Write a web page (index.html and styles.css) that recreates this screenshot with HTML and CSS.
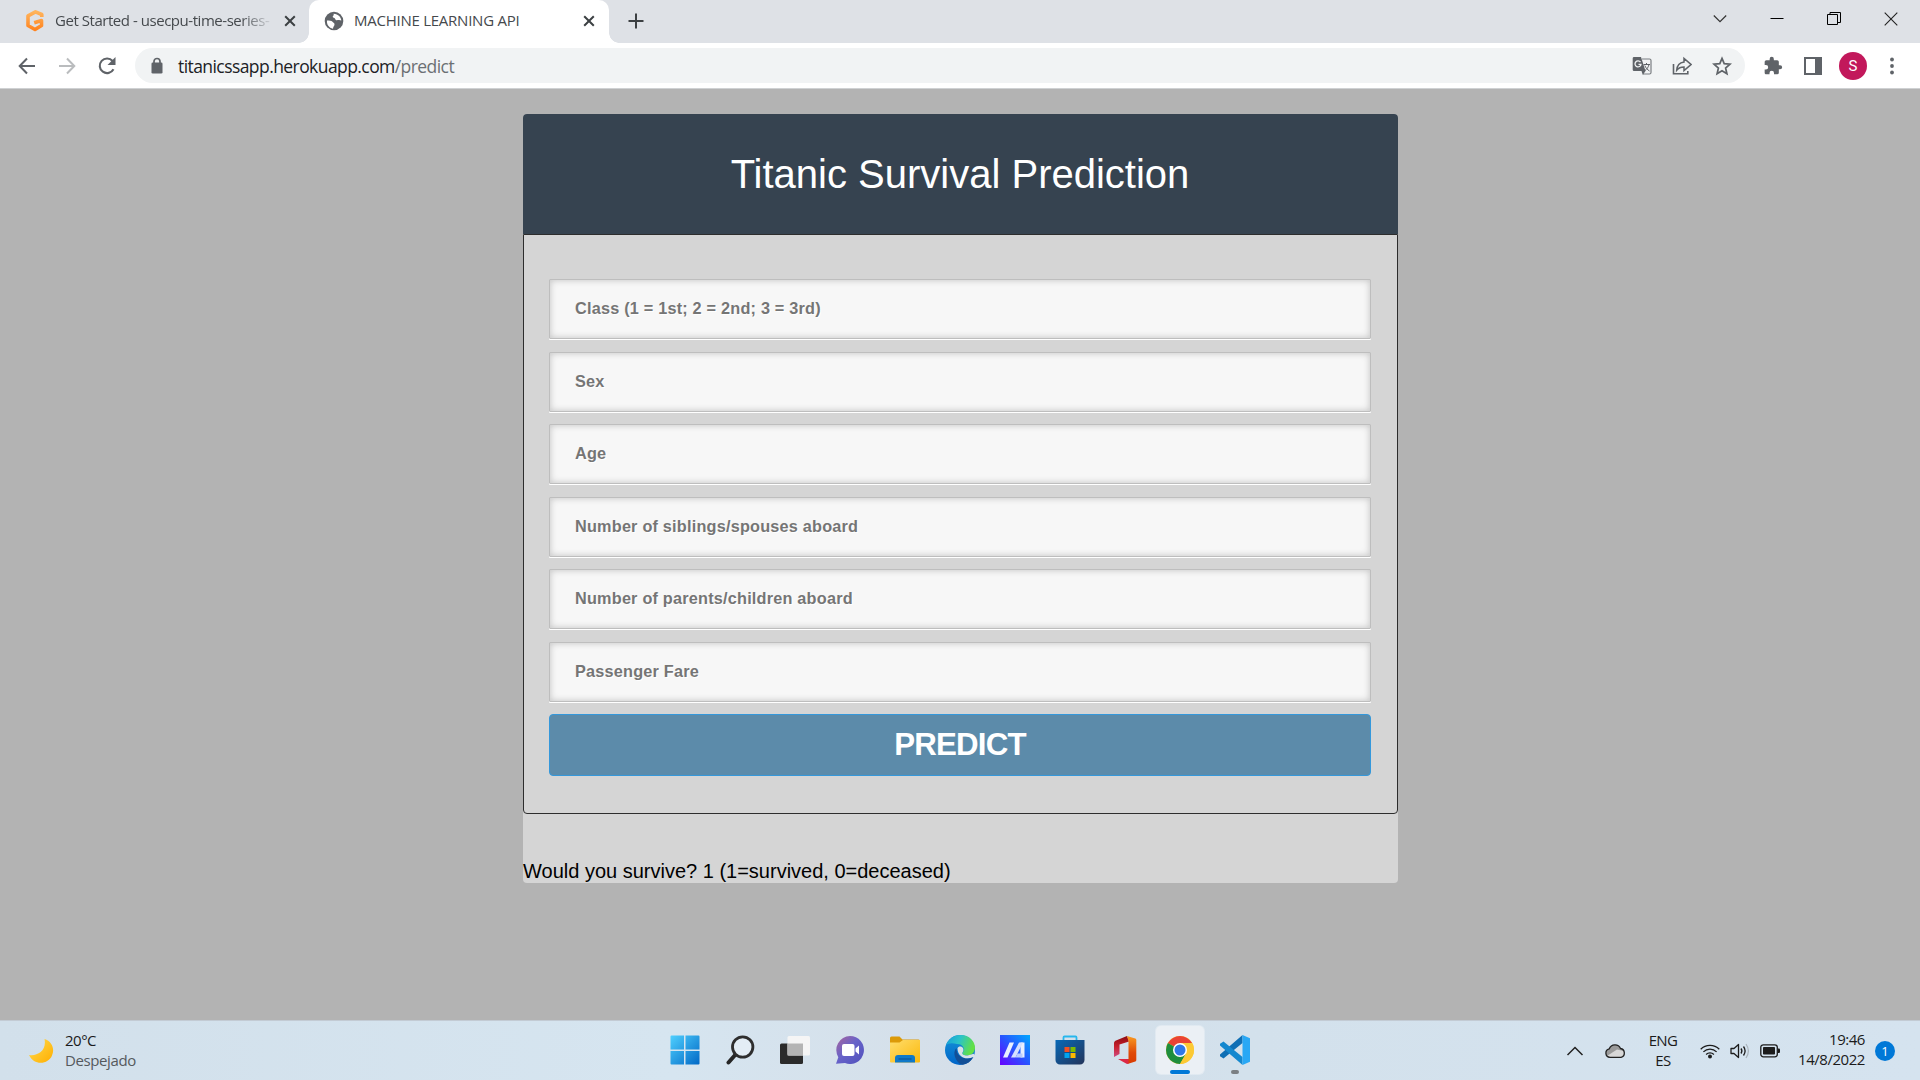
FILE: index.html
```html
<!DOCTYPE html>
<html lang="en">
<head>
<meta charset="utf-8">
<title>MACHINE LEARNING API</title>
<link rel="stylesheet" href="styles.css">
</head>
<body>
<header class="tabstrip">
  <div class="tab tab-first">
    <svg class="fav" width="20" height="24" viewBox="0 0 20 24"><path d="M16.800 8V5.500L10.500 2.800 3 6.800v9.700l7 4 6.500-4v-5L9.200 13.800" fill="none" stroke="url(#og)" stroke-width="3.600" stroke-linejoin="round"/><defs><linearGradient id="og" x1="0" y1="0" x2="0" y2="1"><stop offset="0" stop-color="#ffb45c"/><stop offset="1" stop-color="#ff8420"/></linearGradient></defs></svg>
    <span class="tab-title faded"><span class="t-get">Get Started - usecpu-time-series-</span></span>
    <svg class="tab-x" width="12" height="12" viewBox="0 0 12 12"><path d="M1.200 1.200l9.600 9.600M10.800 1.200l-9.600 9.600" stroke="#3c4043" stroke-width="2"/></svg>
  </div>
  <div class="tab tab-active">
    <svg class="globe" width="20" height="20" viewBox="0 0 20 20"><circle cx="10" cy="10" r="9.300" fill="#5f6368"/><path d="M3 9.500c2 .2 4.500-.2 5.500 1.300s2 1.200 2 2.700c0 1.500-1.300 2-1.500 4.200C5 17 2.500 13.500 3 9.500zM9.500 2.700c1 1.500-.7 2-.8 3 .1 1.300 2.300.8 2.500 2.200.2 1.200 1.600 1.600 2.800 1.200 1.300-.3 2-.2 3.300.5-.2-3.500-2.800-6.600-7.800-6.900z" fill="#fff"/></svg>
    <span class="tab-title t-ml">MACHINE LEARNING API</span>
    <svg class="tab-x" width="12" height="12" viewBox="0 0 12 12"><path d="M1.200 1.200l9.600 9.600M10.800 1.200l-9.600 9.600" stroke="#3c4043" stroke-width="2"/></svg>
  </div>
  <svg class="plus" width="16" height="16" viewBox="0 0 16 16"><path d="M8 .5v15M.5 8h15" stroke="#3c4043" stroke-width="2"/></svg>
  <div class="win">
    <svg width="14" height="14" viewBox="0 0 14 14"><path d="M.8 3.500 7 9.700l6.200-6.200" fill="none" stroke="#333" stroke-width="1.200"/></svg>
    <svg width="14" height="14" viewBox="0 0 14 14"><path d="M.5 6.500h13" stroke="#000"/></svg>
    <svg width="14" height="14" viewBox="0 0 14 14"><path d="M.5 2.500h10v10H.5zM3 2.500v-2h10.500V10.500h-3" fill="none" stroke="#000"/></svg>
    <svg width="14" height="14" viewBox="0 0 14 14"><path d="M.7.7l12.600 12.600M13.300.7.7 13.300" stroke="#222" stroke-width="1.100"/></svg>
  </div>
</header>
<nav class="toolbar">
  <svg class="nav-i" width="18" height="18" viewBox="0 0 18 18"><path d="M17 9H2M9 1.500 1.700 9 9 16.500" fill="none" stroke="#5f6368" stroke-width="2"/></svg>
  <svg class="nav-i" width="18" height="18" viewBox="0 0 18 18"><path d="M1 9h15M9 1.500 16.300 9 9 16.500" fill="none" stroke="#babcbe" stroke-width="2"/></svg>
  <svg class="nav-i reload" width="18" height="20" viewBox="0 0 18 20"><path d="M15.500 13.200A7.300 7.300 0 1 1 14.600 5l1.500 2" fill="none" stroke="#5f6368" stroke-width="2.100"/><path d="M17.500 1v8h-8z" fill="#5f6368"/></svg>
  <div class="omnibox">
    <svg class="lock" width="12" height="17" viewBox="0 0 12 17"><path d="M3 7V4.500a3 3 0 0 1 6 0V7" fill="none" stroke="#5f6368" stroke-width="1.700"/><rect x=".5" y="5.500" width="11" height="11" rx="1.300" fill="#5f6368"/></svg>
    <span class="url">titanicssapp.herokuapp.com<span class="path">/predict</span></span>
    <div class="omni-icons">
      <svg width="20" height="20" viewBox="0 0 20 20"><path d="M10 3h7.500A1.500 1.500 0 0 1 19 4.500v12a1.500 1.500 0 0 1-1.500 1.500H11" fill="none" stroke="#7b7e82" stroke-width="1.200"/><path d="M2 1h7l4.500 14H2a1.300 1.300 0 0 1-1.300-1.300V2.300A1.300 1.300 0 0 1 2 1z" fill="#5f6368"/><path d="M9.500 15h4L10.800 19z" fill="#5f6368"/><path d="M8.500 6.200A3 3 0 1 0 9 8.300H6.500" fill="none" stroke="#f1f3f4" stroke-width="1.300"/><path d="M11.500 8.500H18M14.500 7v1.500M17 8.500c-.5 2.500-2 4.500-4 6M12.800 9.500c1 2.500 2.500 4 4.700 5.500" fill="none" stroke="#5f6368"/></svg>
      <svg width="20" height="20" viewBox="0 0 20 20"><path d="M1.500 8v9.700h14.300V15" fill="none" stroke="#5f6368" stroke-width="1.600"/><path d="M12 6V2.500l7 6-7 6V11c-3.500 0-5.600 1-7.300 3.200C5 10 7.300 6.700 12 6z" fill="none" stroke="#5f6368" stroke-width="1.500"/></svg>
      <svg width="20" height="20" viewBox="0 0 20 20"><path d="m10 2.400 2.200 5.300 5.800.5-4.400 3.800 1.300 5.700-4.900-3-4.900 3 1.300-5.700L2 8.200l5.800-.5z" fill="none" stroke="#5f6368" stroke-width="1.700"/></svg>
    </div>
  </div>
  <div class="ext">
    <svg width="20" height="20" viewBox="0 0 24 24"><path d="M20.500 11H19V7a2 2 0 0 0-2-2h-4V3.500a2.500 2.500 0 0 0-5 0V5H4a2 2 0 0 0-2 2v3.800h1.500a2.700 2.700 0 0 1 0 5.400H2V20c0 1.100.9 2 2 2h3.800v-1.500a2.700 2.700 0 0 1 5.400 0V22H17a2 2 0 0 0 2-2v-4h1.500a2.500 2.500 0 0 0 0-5z" fill="#5f6368"/></svg>
    <svg width="18" height="18" viewBox="0 0 18 18"><path d="M0 0h18v18H0zM2 2v14h9V2z" fill="#5f6368" fill-rule="evenodd"/></svg>
    <span class="avatar">S</span>
    <svg class="dots" width="4" height="18" viewBox="0 0 4 18"><g fill="#5f6368"><circle cx="2" cy="2.500" r="1.900"/><circle cx="2" cy="9" r="1.900"/><circle cx="2" cy="15.500" r="1.900"/></g></svg>
  </div>
</nav>
<main class="page">
  <div class="card">
    <h1 class="title">Titanic Survival Prediction</h1>
    <form class="form">
      <input class="field" type="text" placeholder="Class (1 = 1st; 2 = 2nd; 3 = 3rd)">
      <input class="field" type="text" placeholder="Sex">
      <input class="field" type="text" placeholder="Age">
      <input class="field" type="text" placeholder="Number of siblings/spouses aboard">
      <input class="field" type="text" placeholder="Number of parents/children aboard">
      <input class="field" type="text" placeholder="Passenger Fare">
      <button class="predict" type="button">PREDICT</button>
    </form>
    <p class="result">Would you survive? 1 (1=survived, 0=deceased)</p>
  </div>
</main>
<footer class="taskbar">
  <div class="weather">
    <svg width="26" height="26" viewBox="0 0 26 26"><defs><linearGradient id="mo" x1="0" y1="0" x2="1" y2="1"><stop offset="0" stop-color="#ffdc50"/><stop offset="1" stop-color="#ffae00"/></linearGradient></defs><path d="M16.500 1C24 3.500 27 11 24 17.500 20.500 26.500 6 28 1 17c8 1.500 18-4 15.500-16z" fill="url(#mo)"/></svg>
    <div class="wtext"><span class="temp">20°C</span><span class="cond">Despejado</span></div>
  </div>
  <div class="apps">
    <div class="app"><svg width="30" height="30" viewBox="0 0 30 30"><defs><linearGradient id="w" x1="0" y1="0" x2="30" y2="30" gradientUnits="userSpaceOnUse"><stop offset="0" stop-color="#50d1ff"/><stop offset="1" stop-color="#0067c5"/></linearGradient></defs><path d="M.5 1.500a1 1 0 0 1 1-1H14v14H.5zM15.500.500h13a1 1 0 0 1 1 1v13h-14zM.5 16H14v13.500H1.500a1 1 0 0 1-1-1zM15.500 16h14v12.500a1 1 0 0 1-1 1h-13z" fill="url(#w)"/></svg></div>
    <div class="app"><svg width="30" height="30" viewBox="0 0 30 30"><path d="m11 19-7.500 8.500" stroke="#262626" stroke-width="4" stroke-linecap="round"/><circle cx="17.700" cy="12" r="10.200" fill="#e3edf5" stroke="#2e2e2e" stroke-width="2.800"/></svg></div>
    <div class="app"><svg width="32" height="30" viewBox="0 0 32 30"><rect x="1" y="8.500" width="23" height="20.500" rx="1.500" fill="#2b2b2b"/><rect x="8.500" y="1" width="22.500" height="19.500" rx="1.500" fill="#f5f5f5"/><path d="M8.500 8.500H24v12H8.500z" fill="#b4b4b4"/></svg></div>
    <div class="app"><svg width="30" height="30" viewBox="0 0 30 30"><defs><linearGradient id="ch" x1="0" y1="0" x2="1" y2="1"><stop offset="0" stop-color="#ab659b"/><stop offset=".45" stop-color="#6863c9"/><stop offset="1" stop-color="#4f50bc"/></linearGradient></defs><path d="M15 1a14 14 0 1 1-5 27.100L1 28.700l2.300-6.500A14 14 0 0 1 15 1z" fill="url(#ch)"/><rect x="7" y="9" width="12.500" height="12" rx="2" fill="#fff"/><path d="M20.500 13.500 24 10.500v9l-3.500-3z" fill="#fff"/></svg></div>
    <div class="app"><svg width="30" height="30" viewBox="0 0 30 30"><defs><linearGradient id="fo" x1="0" y1="0" x2="1" y2="1"><stop offset="0" stop-color="#ffdd6b"/><stop offset="1" stop-color="#fbb90d"/></linearGradient></defs><path d="M0 3a1.500 1.500 0 0 1 1.500-1.500h8L12.500 4.500H28.500A1.500 1.500 0 0 1 30 6v6H0z" fill="#dc9a08"/><path d="M0 7.500h9.500l3.500-2.500h17v21.500a1 1 0 0 1-1 1H1a1 1 0 0 1-1-1z" fill="url(#fo)"/><path d="M5 27.500V23a3 3 0 0 1 3-3h14a3 3 0 0 1 3 3v4.500z" fill="#1079c8"/><path d="M8.500 24h13" stroke="#0a4e91"/></svg></div>
    <div class="app"><svg width="30" height="30" viewBox="0 0 30 30"><defs><linearGradient id="e1" x1="0" y1="0" x2="1" y2=".3"><stop offset="0" stop-color="#149ddb"/><stop offset=".5" stop-color="#2bc3c8"/><stop offset="1" stop-color="#62e046"/></linearGradient><linearGradient id="e2" x1="0" y1="0" x2="0" y2="1"><stop offset="0" stop-color="#1593d8"/><stop offset="1" stop-color="#0064c8"/></linearGradient></defs><circle cx="15" cy="15" r="15" fill="url(#e2)"/><path d="M1 10.500C3.500 3.800 9 0 15.500 0 24.500 0 30 6.500 30 12.500c0 5-3.500 8-8 8-3.500 0-5.500-1.500-4.300-3 2.600-3.500.5-8.500-5.700-8.500C7 7.500 3 8 1 10.500z" fill="url(#e1)"/><path d="M11.500 13C7 17 10 27 17 29.800c5-.5 9-3.300 11.300-7.800C20 26 11 22 11.500 13z" fill="#124f97"/><path d="M12.500 13.200c1-2.200 4.500-2.200 5.700.3.500 1.500 0 3-.7 4-1 1.800 2 3.200 5 3l6.300-1.700L30 22h-1.700c-7 3.200-15.500.5-15.800-8.800z" fill="#d9e1e8"/></svg></div>
    <div class="app"><svg width="30" height="30" viewBox="0 0 30 30"><defs><linearGradient id="ma" x1="1" y1="0" x2="0" y2="1"><stop offset="0" stop-color="#00a9ff"/><stop offset=".5" stop-color="#2855ff"/><stop offset="1" stop-color="#6800ff"/></linearGradient></defs><path d="M0 0h30v30H0z" fill="url(#ma)"/><path d="M9.500 7.500h4.500L7.500 22.500H3zM20.500 7.500h4v15H20.500z" fill="#e8efff"/><path d="M19 7.500h4L15.500 22.500H11z" fill="#d5e0ff"/><path d="M17.500 18.500h5v4h-7z" fill="#b9cbff"/></svg></div>
    <div class="app"><svg width="30" height="30" viewBox="0 0 30 30"><defs><linearGradient id="st" x1="0" y1="0" x2="1" y2="1"><stop offset="0" stop-color="#0869b7"/><stop offset="1" stop-color="#24345a"/></linearGradient></defs><path d="M8.500 7V2.500a1 1 0 0 1 1-1h11a1 1 0 0 1 1 1V7" fill="none" stroke="#27b7ed" stroke-width="1.800"/><path d="M.5 5h29v20a4.500 4.500 0 0 1-4.500 4.500H5A4.500 4.500 0 0 1 .5 25z" fill="url(#st)"/><path d="M9.500 12h5v5h-5z" fill="#f25022"/><path d="M15.500 12h5v5h-5z" fill="#7fba00"/><path d="M9.500 18h5v5h-5z" fill="#00a4ef"/><path d="M15.500 18h5v5h-5z" fill="#ffb900"/></svg></div>
    <div class="app"><svg width="24" height="30" viewBox="0 0 24 30"><defs><linearGradient id="of" x1="0" y1="0" x2="0" y2="1"><stop offset="0" stop-color="#f99b22"/><stop offset=".6" stop-color="#e04a08"/><stop offset="1" stop-color="#d83b01"/></linearGradient><linearGradient id="ol" x1="0" y1="0" x2="0" y2="1"><stop offset="0" stop-color="#8b0b12"/><stop offset=".5" stop-color="#c8202c"/><stop offset="1" stop-color="#d04a80"/></linearGradient></defs><path d="M14 1 3 5.500C1.500 6.200 1 7 1 8.500V22l5.500-3V9.500L16 6.500z" fill="url(#ol)"/><path d="M14 1l8.300 2.500c.7.300 1 .8 1 1.500v20c0 .7-.3 1.200-1 1.500L14.500 29 14 24h1.500V6z" fill="url(#of)"/><path d="M5 24h10.500v4.500l-1.500.5z" fill="#dc2945"/></svg></div>
    <div class="app app-on"><svg width="30" height="30" viewBox="0 0 30 30"><circle cx="15" cy="15" r="14" fill="#fcc934"/><path d="M15 15 2.900 8A14 14 0 0 1 27.100 8z" fill="#ea4335"/><path d="M2.900 8A14 14 0 0 0 15 29l6.100-10.500L15 15z" fill="#1e8e3e"/><path d="M15 8h12.100A14 14 0 0 1 15 29l6.100-10.500z" fill="#fcc934"/><circle cx="15" cy="15" r="7" fill="#fff"/><circle cx="15" cy="15" r="5.500" fill="#2f78e8"/></svg><i class="bar"></i></div>
    <div class="app"><svg width="30" height="30" viewBox="0 0 30 30"><path d="M0 19.500 22.500 0v8L3.500 23.500.5 21.500a1.200 1.200 0 0 1-.5-2z" fill="#0f6fb5"/><path d="M0 10.500 22.500 30v-8L3.500 6.500.5 8.500a1.200 1.200 0 0 0-.5 2z" fill="#1488cf"/><path d="M22.500 0 30 3.200v23.600L22.500 30z" fill="#29a8f5"/></svg><i class="dot"></i></div>
  </div>
  <div class="tray">
    <svg class="up" width="18" height="12" viewBox="0 0 18 12"><path d="m1.500 10 7.500-7.500L16.500 10" fill="none" stroke="#222" stroke-width="1.500"/></svg>
    <svg class="cloud" width="22" height="16" viewBox="0 0 22 16"><path d="M6 14.300a4.300 4.300 0 0 1-.7-8.500 6 6 0 0 1 11.200-.3 4.500 4.500 0 0 1 .5 8.800z" fill="#9a9a9a"/><path d="m3 13 10-6.500 6.500 1.500 1 4.500-3.500 1.800H6z" fill="#d8d8d8"/><path d="M6 14.300a4.300 4.300 0 0 1-.7-8.500 6 6 0 0 1 11.200-.3 4.500 4.500 0 0 1 .5 8.800z" fill="none" stroke="#222" stroke-width="1.300"/></svg>
    <div class="lang"><span>ENG</span><span>ES</span></div>
    <svg class="wifi" width="20" height="16" viewBox="0 0 20 16"><g fill="none" stroke="#1c1c1c" stroke-width="1.300"><path d="M.7 6.200a13 13 0 0 1 18.600 0M3.400 8.900a9.300 9.300 0 0 1 13.200 0M6.100 11.500a5.500 5.500 0 0 1 7.800 0"/></g><circle cx="10" cy="13.500" r="2" fill="#1c1c1c"/></svg>
    <svg class="vol" width="20" height="16" viewBox="0 0 20 16"><path d="M1 5.500h3L8.500 1.500v13L4 10.500H1z" fill="none" stroke="#1c1c1c" stroke-width="1.300" stroke-linejoin="round"/><path d="M11 5.500q1.800 2.500 0 5M13.500 3.500q3.200 4.500 0 9" fill="none" stroke="#1c1c1c" stroke-width="1.300"/><path d="M16 1q4.800 7 0 14" fill="none" stroke="#a9b3bb" stroke-width="1.200"/></svg>
    <svg class="bat" width="21" height="14" viewBox="0 0 21 14"><rect x=".8" y=".8" width="16.500" height="12" rx="2.500" fill="none" stroke="#1c1c1c" stroke-width="1.300"/><rect x="3" y="3" width="12" height="7.600" rx=".8" fill="#1c1c1c"/><path d="M18 4.500h1a1 1 0 0 1 1 1v2.500a1 1 0 0 1-1 1h-1z" fill="#1c1c1c"/></svg>
    <div class="clock"><span class="time">19:46</span><span class="date">14/8/2022</span></div>
    <span class="badge">1</span>
  </div>
</footer>
</body>
</html>
```
FILE: styles.css
```css
* { box-sizing: border-box; }
body {
  margin: 0;
  width: 1920px;
  height: 1080px;
  overflow: hidden;
  display: flex;
  flex-direction: column;
  font-family: "Open Sans", "Noto Sans", sans-serif;
  background: #b3b3b3;
}
svg { display: block; flex: none; }

/* Browser tabs */
.tabstrip { height: 43px; flex: none; display: flex; align-items: stretch; background: #dee1e6; }
.tab { display: flex; align-items: center; height: 43px; padding-bottom: 2px; }
.tab-first { width: 309px; padding-left: 25px; }
.tab-title { font-size: 15px; line-height: 20px; padding-bottom: 1px; white-space: nowrap; color: #45494d; }
.faded { width: 219px; margin-left: 10px; overflow: hidden; -webkit-mask-image: linear-gradient(90deg, #000 185px, transparent 219px); }
.t-get { letter-spacing: -0.46px; }
.t-ml { width: 229px; margin-left: 10px; letter-spacing: -0.25px; }
.tab-first .tab-x { margin-left: 10px; }
.tab-active { position: relative; width: 300px; padding-left: 15px; background: #fff; border-radius: 10px 10px 0 0; }
.tab-active::before, .tab-active::after { content: ""; position: absolute; bottom: 0; width: 10px; height: 10px; }
.tab-active::before { left: -10px; background: radial-gradient(circle at 0 0, transparent 9.5px, #fff 10px); }
.tab-active::after { right: -10px; background: radial-gradient(circle at 100% 0, transparent 9.5px, #fff 10px); }
.plus { margin: 13px 0 0 19px; }
.win { margin-left: auto; display: flex; gap: 43px; padding: 12px 22px 0 0; }

/* Address bar */
.toolbar { height: 46px; flex: none; display: flex; align-items: center; background: #fff; border-bottom: 1px solid #cfd1d3; padding: 0 26px 0 18px; }
.nav-i { margin-right: 22px; }
.reload { margin-right: 19px; }
.omnibox { width: 1610px; height: 35px; border-radius: 18px; background: #f1f3f4; display: flex; align-items: center; padding: 0 13px 0 16px; }
.url { margin-left: 15px; font-size: 17.5px; letter-spacing: -0.57px; color: #202124; white-space: nowrap; line-height: 24px; }
.path { color: #6b6f73; }
.omni-icons { margin-left: auto; display: flex; gap: 20px; }
.ext { margin-left: auto; display: flex; align-items: center; }
.ext .avatar { width: 28px; height: 28px; margin-left: 17px; border-radius: 50%; background: #c2185b; color: #fff; font: 15px/28px Roboto, sans-serif; text-align: center; }
.ext svg + svg { margin-left: 21px; }
.ext .dots { margin-left: 23px; }

/* Prediction form */
.page { flex: 1; display: flex; justify-content: center; align-items: flex-start; padding: 25px 0 0 1px; background: #b3b3b3; font-family: "Liberation Sans", Arial, sans-serif; }
.card { width: 875px; height: 769px; background: #d5d5d5; border-radius: 4px; }
.title { margin: 0; height: 120px; padding-right: 1px; border-radius: 4px 4px 0 0; background: #364350; color: #fff; font-size: 40px; font-weight: 400; line-height: 120px; text-align: center; }
.form { height: 580px; border: 1px solid #2d2d2d; border-radius: 0 0 4px 4px; padding: 44px 26px 0 25px; display: flex; flex-direction: column; gap: 12.5px; }
.field { display: block; width: 100%; height: 60px; margin: 0; padding: 0 25px 1px; border: 1px solid #bebebe; border-radius: 1px; outline: 0; background: #f7f7f7; box-shadow: 0 1px 0 #fff, inset 0 0 7px rgba(0,0,0,.22); font: bold 16.25px "Liberation Sans", Arial, sans-serif; letter-spacing: 0.21px; }
.field::placeholder { color: #757575; opacity: 1; text-shadow: 1px 1px 0 #fff; }
.predict { width: 100%; height: 62px; margin: 0; padding: 0; border: 1px solid #3498db; border-radius: 4px; background: #5c8baa; color: #fff; font: bold 31.25px/60px "Liberation Sans", Arial, sans-serif; letter-spacing: -0.8px; }
.result { margin: 45px 0 0; font-size: 20px; line-height: 24px; color: #000; }

/* Taskbar */
.taskbar { height: 60px; flex: none; display: grid; grid-template-columns: 661px 598px 661px; background: linear-gradient(90deg, #d2e0eb, #d6e5f0 35%, #d5dfe9 50%, #d3e1ec 65%, #d5e3ef); border-top: 1px solid #c3cbd4; color: #1b1b1b; }
.weather { display: flex; padding: 17px 0 0 28px; gap: 11px; }
.wtext { display: flex; flex-direction: column; margin-top: -8px; font-size: 15px; line-height: 20px; }
.temp { letter-spacing: -0.5px; }
.cond { letter-spacing: -0.4px; color: #55595d; }
.apps { display: flex; gap: 7px; padding-top: 5px; }
.app { position: relative; width: 48px; height: 48px; display: flex; align-items: center; justify-content: center; }
.app-on { background: #ebf0f5; border-radius: 5px; box-shadow: 0 0 0 1px rgba(255,255,255,.3); }
.bar, .dot { position: absolute; bottom: 0; left: 14px; width: 20px; height: 4px; border-radius: 2px; background: #0078d7; }
.dot { left: 20px; width: 8px; background: #7b7f83; }
.tray { display: flex; align-items: center; justify-content: flex-end; padding-right: 25px; font-size: 15px; line-height: 20px; }
.cloud { margin-left: 20px; }
.lang { width: 40px; margin-left: 17px; padding-bottom: 2px; display: flex; flex-direction: column; align-items: center; letter-spacing: -0.6px; }
.wifi { margin-left: 17px; }
.vol { margin-left: 10px; }
.bat { margin-left: 10px; }
.clock { width: 84px; padding-bottom: 3px; display: flex; flex-direction: column; align-items: flex-end; letter-spacing: -0.45px; }
.badge { width: 20px; height: 20px; margin-left: 10px; border-radius: 50%; background: #0078d7; color: #fff; font-size: 13px; text-align: center; }
```
